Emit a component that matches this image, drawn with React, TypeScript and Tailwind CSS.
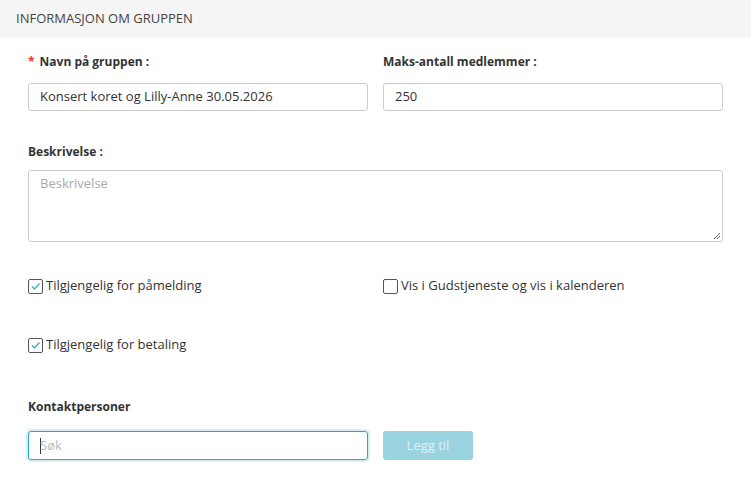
export default function App() {
  const font = { fontFamily: '"Open Sans", sans-serif' };
  const Check = ({ checked }: { checked: boolean }) => (
    <span className="w-[15px] h-[15px] border border-[#555] rounded-[2px] flex items-center justify-center bg-white">
      {checked && (
        <svg width="11" height="11" viewBox="0 0 11 11">
          <path d="M2 5.5 L4.5 8 L9.5 2.5" fill="none" stroke="#2aa5c8" strokeWidth="1.2" />
        </svg>
      )}
    </span>
  );
  return (
    <div className="w-[751px] h-[488px] bg-white text-[#333] text-[13px]" style={font}>
      <div className="h-[38px] bg-[#f5f5f5] flex items-center px-[16px] text-[13px] text-[#444]">
        INFORMASJON OM GRUPPEN
      </div>
      <div className="px-[28px]">
        <div className="grid grid-cols-2 gap-x-[15px] pt-[15px]">
          <div>
            <div className="h-[18px] flex items-center font-bold text-[12px]">
              <span className="text-[#e53935] mr-[5px]">*</span>Navn på gruppen :
            </div>
            <div className="mt-[12px] h-[28px] border border-[#ccc] rounded-[3px] px-[11px] flex items-center">
              Konsert koret og Lilly-Anne 30.05.2026
            </div>
          </div>
          <div>
            <div className="h-[18px] flex items-center font-bold text-[12px]">Maks-antall medlemmer :</div>
            <div className="mt-[12px] h-[28px] border border-[#ccc] rounded-[3px] px-[11px] flex items-center">250</div>
          </div>
        </div>
        <div className="mt-[32px] h-[18px] flex items-center font-bold text-[12px]">Beskrivelse :</div>
        <div className="mt-[9px] h-[72px] border border-[#ccc] rounded-[3px] px-[11px] pt-[3px] text-[#aaa] relative">
          Beskrivelse
          <svg className="absolute right-[1px] bottom-[1px]" width="8" height="8" viewBox="0 0 8 8">
            <path d="M7 1 L1 7 M7 4 L4 7" stroke="#666" strokeWidth="1" />
          </svg>
        </div>
        <div className="grid grid-cols-2 gap-x-[15px] mt-[36px]">
          <label className="flex items-center gap-[3px] h-[16px]"><Check checked />Tilgjengelig for påmelding</label>
          <label className="flex items-center gap-[3px] h-[16px]"><Check checked={false} />Vis i Gudstjeneste og vis i kalenderen</label>
        </div>
        <label className="flex items-center gap-[3px] h-[16px] mt-[43px]"><Check checked />Tilgjengelig for betaling</label>
        <div className="mt-[45px] h-[18px] flex items-center font-bold text-[12px]">Kontaktpersoner</div>
        <div className="flex gap-[15px] mt-[15px]">
          <div className="w-[340px] h-[29px] border border-[#2aa5c8] rounded-[3px] shadow-[0_0_0_2px_#d7eef5] px-[11px] flex items-center text-[#bbb]">
            <span className="w-px h-[16px] bg-[#333] -mr-px"></span>Søk
          </div>
          <button className="w-[90px] h-[29px] rounded-[3px] bg-[#9ad3e0] text-white/70">Legg til</button>
        </div>
      </div>
    </div>
  );
}
